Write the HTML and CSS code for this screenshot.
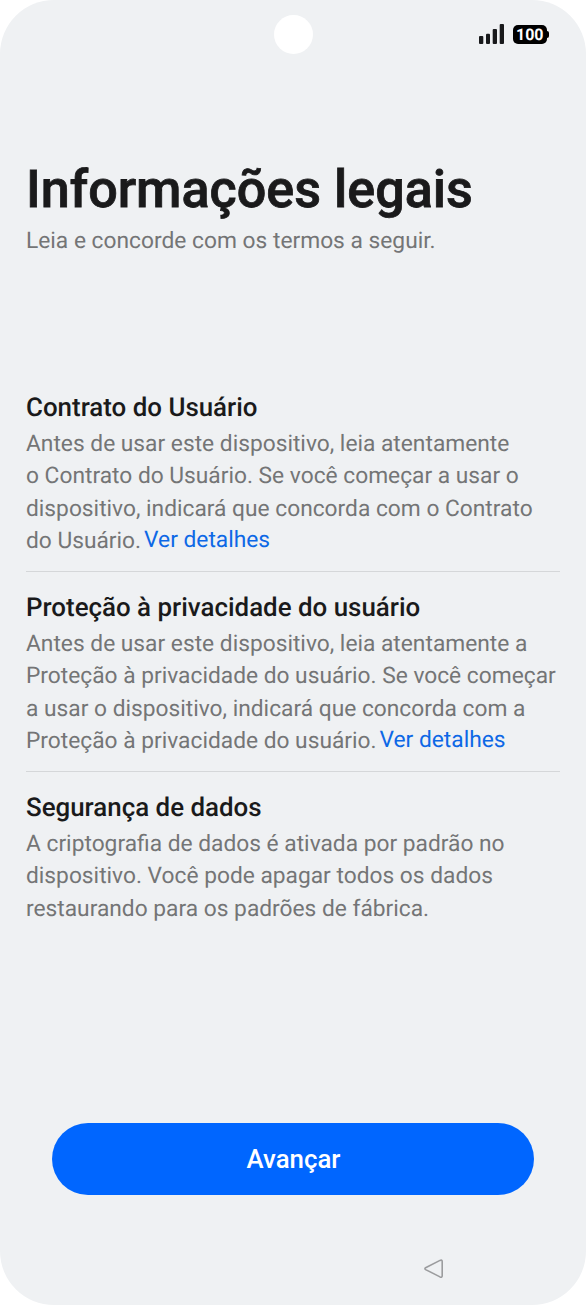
FILE: index.html
```html
<!DOCTYPE html>
<html lang="pt-BR">
<head>
<meta charset="utf-8">
<title>Informações legais</title>
<link rel="stylesheet" href="styles.css">
</head>
<body>
<main class="screen">
  <header class="status">
    <span class="camera"></span>
    <div class="indicators">
      <svg class="signal" width="25" height="20" viewBox="0 0 25 20"><rect x="0" y="12" width="4.300" height="8" rx="1"/><rect x="7" y="9.800" width="4" height="10.200" rx="1"/><rect x="13.700" y="5" width="4.300" height="15" rx="1"/><rect x="20.700" y="0" width="4.300" height="20" rx="1"/></svg>
      <span class="battery">100</span><span class="battery-tip"></span>
    </div>
  </header>
  <div class="intro">
    <h1 class="title">Informações legais</h1>
    <p class="subtitle">Leia e concorde com os termos a seguir.</p>
  </div>
  <div class="terms">
    <section class="term">
      <h2 class="term-title">Contrato do Usuário</h2>
      <p class="term-text">Antes de usar este dispositivo, leia atentamente<br>o Contrato do Usuário. Se você começar a usar o<br>dispositivo, indicará que concorda com o Contrato<br>do Usuário.<a class="link">Ver detalhes</a></p>
    </section>
    <section class="term">
      <h2 class="term-title">Proteção à privacidade do usuário</h2>
      <p class="term-text">Antes de usar este dispositivo, leia atentamente a<br>Proteção à privacidade do usuário. Se você começar<br>a usar o dispositivo, indicará que concorda com a<br>Proteção à privacidade do usuário.<a class="link">Ver detalhes</a></p>
    </section>
    <section class="term">
      <h2 class="term-title">Segurança de dados</h2>
      <p class="term-text">A criptografia de dados é ativada por padrão no<br>dispositivo. Você pode apagar todos os dados<br>restaurando para os padrões de fábrica.</p>
    </section>
  </div>
  <button class="next">Avançar</button>
  <nav class="nav"><svg width="22" height="22" viewBox="0 0 22 22"><path d="M2.600 9.700 17 2.400Q19.200 1.500 19.200 3.500V17.700Q19.200 19.800 17 18.900L2.600 11.600Q1.200 10.600 2.600 9.700Z" fill="none" stroke="#9b9c9e" stroke-width="1.600" stroke-linejoin="round"/></svg></nav>
</main>
</body>
</html>
```
FILE: styles.css
```css
* { box-sizing: border-box; }
body { margin: 0; background: #fff; font-family: Roboto, sans-serif; text-rendering: geometricPrecision; }
.screen { width: 586px; height: 1305px; background: #eff1f3; border-radius: 54px; overflow: hidden; display: flex; flex-direction: column; }
.status { height: 68px; display: grid; grid-template-columns: 1fr 39px 1fr; align-items: center; flex: none; }
.camera { grid-column: 2; width: 39px; height: 39px; border-radius: 50%; background: #fff; }
.indicators { display: flex; align-items: center; justify-content: flex-end; padding-right: 37px; }
.signal { margin: -1px 8.500px 0 0; fill: #18191b; }
.battery { width: 34.500px; height: 19px; border-radius: 5px; background: #000; color: #fff; font-size: 16px; font-weight: 700; line-height: 19.500px; text-align: center; }
.battery-tip { width: 2px; height: 7px; background: #000; border-radius: 0 2px 2px 0; }
.intro { height: 321px; padding: 90px 26px 0; flex: none; }
.title { margin: 0; font-size: 52.100px; line-height: 64px; font-weight: 500; -webkit-text-stroke: 0.800px #1a1a1b; color: #1a1a1b; white-space: nowrap; }
.subtitle { margin: 3px 0 0; font-size: 22.780px; line-height: 32px; color: #747576; white-space: nowrap; }
.terms { padding: 0 26px; height: 734px; flex: none; }
.term { height: 200px; padding-top: 18px; }
.term:first-child { height: 182px; padding-top: 1px; }
.term + .term { border-top: 1px solid #d5d7d9; }
.term-title { margin: 0; font-size: 25.900px; line-height: 36px; font-weight: 500; color: #1a1a1b; white-space: nowrap; }
.term-text { margin: 1.500px 0 0; font-size: 22.750px; line-height: 32.500px; color: #747576; white-space: nowrap; }
.link { display: inline-block; line-height: 30px; margin-left: 3px; color: #0d68e6; transform: translateY(-1px); }
.next { flex: none; margin: 0 52px; height: 71.500px; border: 0; border-radius: 36px; background: #0066ff; color: #fff; font: 500 25.800px Roboto, sans-serif; padding: 1px 0 0 1px; }
.nav { display: flex; padding: 63.500px 0 0 423px; }
```
